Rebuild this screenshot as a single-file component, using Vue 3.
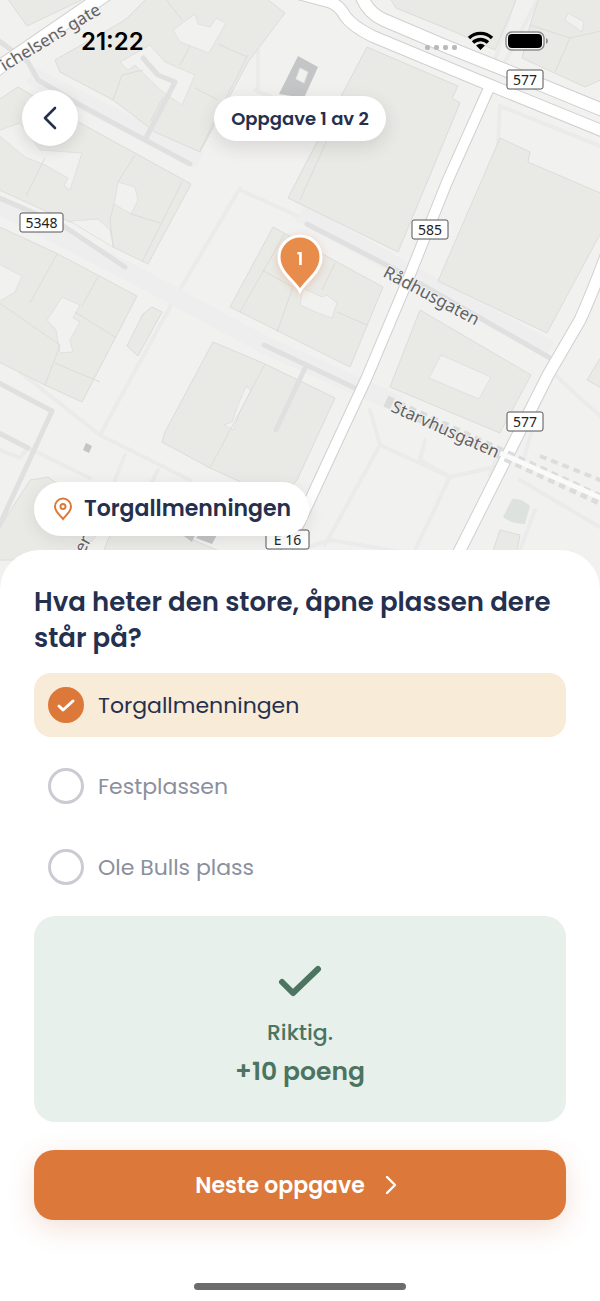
<script setup>
import { ref } from 'vue'

const place = 'Torgallmenningen'
const options = ['Torgallmenningen', 'Festplassen', 'Ole Bulls plass']
const selected = ref('Torgallmenningen')

// map geometry, in map units
const buildings = [
  '5,-5 27,26 92,-5',
  '55,60 125,20 150,-5 262,-5 285,13 248,62 200,152 155,132 113,100 60,72',
  '-5,102 18,87 60,112 135,153 191,184 148,264 113,247 98,219 70,222 -5,188',
  '-5,225 28,240 58,254 137,296 82,402 45,385 -5,360',
  '152,307 162,312 138,356 127,346 143,314',
  '273,227 383,287 350,367 230,307',
  '213,342 265,364 335,398 297,480 280,500 210,468 162,442 165,432',
  '367,47 458,86 452,98 460,103 398,252 288,198 305,165',
  '500,138 530,152 528,162 605,195 605,225 547,333 438,281',
  '388,-5 396,8 455,32 495,50 518,-5',
  '540,-5 605,-5 605,78 585,87 522,58 530,25',
  '420,310 531,375 500,433 390,387',
  '605,350 587,380 605,390',
  '30,480 48,477 110,520 75,560 -5,560 -5,535',
  '110,535 170,530 240,560 100,560',
  '500,530 520,535 515,560 490,560'
]

const yards = [
  '173,30 195,14 198,24 210,27 216,18 226,23 209,53 180,42',
  '120,62 150,45 165,62 195,75 182,105 163,92 148,78 135,65 128,70',
  '-5,132 20,123 40,150 82,153 70,190 64,186 68,178 45,165 25,157',
  '118,182 135,187 138,200 131,214 114,204',
  '70,221 98,219 110,230 114,248',
  '-5,262 22,276 15,292 -5,304',
  '62,297 80,305 73,318 80,322 70,340 73,352 60,353 56,330 47,320',
  '303,288 322,297 327,295 337,303 332,318 318,313 300,305',
  '246,386 251,390 240,412 233,430 224,425 232,422 238,405',
  '565,20 568,13 584,22 582,32',
  '441,355 491,377 479,399 429,378'
]

const walls = [
  'M165 -2 182 20M190 46 180 65M195 88 218 100M113 100 122 75 143 70M218 44 247 57',
  'M248 55 200 150M163 97 150 122M135 155 118 182M131 214 160 223M182 182 142 262',
  'M45 158 26 196M114 204 110 220 113 247M57 254 30 303M98 277 82 306',
  'M75 312 115 337M-5 300 60 345 45 385M55 363 100 382M285 233 240 312',
  'M262 270 293 287 277 332M335 263 322 290M337 312 367 325M265 364 210 468',
  'M333 127 300 200M530 25 570 38 555 72M570 38 605 30'
]

const faintPaths = [
  'M240 188 175 298 130 380 100 435',
  'M240 190 300 217',
  'M125 268 180 298 264 338',
  'M20 372 100 435 190 480',
  'M-5 448 20 458 28 448 90 478M125 455 115 480M158 470 152 482',
  'M370 410 380 445 325 545M380 445 450 477 415 550M425 440 420 460 450 477 490 468',
  'M550 370 582 400 605 420M540 400 525 455M500 106 498 145M500 106 605 148',
  'M520 480 605 530M535 510 520 550M255 90 290 105M258 50 258 92',
  'M516 -5 495 60M540 -5 505 62M500 450 490 475M300 550 330 540 420 555'
]

const darkPaths = [
  'M-5 38 28 62 38 80 55 90 80 105 145 140 190 164',
  'M145 140 175 82 158 75 143 58',
  'M-5 196 62 225 125 267',
  'M264 345 355 388',
  'M307 224 400 272 550 358',
  'M-5 381 52 411 -5 535M-5 431 28 448',
  'M305 368 276 430'
]

const roads = [
  { d: 'M-12 75 115 -12', width: 14 },
  { d: 'M285 -10 330 2Q340 6 345 16Q352 26 372 36L480 81 610 134', width: 12 },
  { d: 'M360 -8Q366 12 384 20L450 48 500 68 610 113', width: 13 },
  { d: 'M489 88 447 182 407 282 367 377 310 500 282 560', width: 11 },
  { d: 'M612 240Q592 294 580 320L548 375 455 560', width: 12 }
]

const shields = [
  { text: '577', x: 507, y: 70, width: 36 },
  { text: '5348', x: 20, y: 213, width: 43 },
  { text: '585', x: 412, y: 220, width: 36 },
  { text: '577', x: 507, y: 412, width: 36 },
  { text: 'E 16', x: 266, y: 530, width: 43 }
]
</script>

<template>
  <main class="screen">
    <section class="map">
      <svg class="map-canvas" viewBox="0 0 600 590" preserveAspectRatio="xMidYMin slice" aria-hidden="true">
        <rect width="600" height="590" class="ground" />
        <path v-for="d in faintPaths" :key="d" :d="d" class="path faint" />
        <path d="M-5 203 135 275 265 345 400 405M30 75 200 160M300 213 400 268 550 350" class="street" />
        <polygon v-for="p in buildings" :key="p" :points="p" class="building" />
        <polygon v-for="p in yards" :key="p" :points="p" class="yard" />
        <path v-for="d in walls" :key="d" :d="d" class="wall" />
        <path v-for="d in darkPaths" :key="d" :d="d" class="path dark" />
        <polygon points="298,56 318,67 304,98 279,94" class="tower" />
        <polygon points="300,68 308,72 304,83 296,79" class="yard" />
        <polygon points="86,443 92,446 89,453 83,450" class="tower" />
        <polygon points="180,533 196,533 192,542" class="tower" />
        <polygon points="200,533 218,533 212,544 196,538" class="tower" />
        <path d="M512 499Q520 497 530 506L525 524Q512 524 503 517z" class="pond" />
        <g class="casing">
          <path v-for="r in roads" :key="r.d" :d="r.d" :stroke-width="r.width + 1" />
        </g>
        <g class="road">
          <path v-for="r in roads" :key="r.d" :d="r.d" :stroke-width="r.width - 1" />
        </g>
        <path d="M386 401 500 453 605 502" class="tunnel" />
        <path d="M500 453 605 500" class="tunnel-fill" />
        <path d="M540 456 605 482" class="tunnel thin" />
        <g class="street-name">
          <text transform="translate(102 13) rotate(-31)" text-anchor="end">ichelsens gate</text>
          <text transform="translate(382 276) rotate(28)">Rådhusgaten</text>
          <text transform="translate(390 411) rotate(24)">Starvhusgaten</text>
          <text transform="translate(84 554) rotate(-62)">er</text>
        </g>
        <g v-for="(s, i) in shields" :key="i" class="shield">
          <rect :x="s.x" :y="s.y" :width="s.width" height="19" rx="2" />
          <text :x="s.x + s.width / 2" :y="s.y + 15">{{ s.text }}</text>
        </g>
      </svg>

      <svg class="pin" viewBox="0 0 48 62" aria-label="Oppgave 1">
        <path d="M24 58C19 48 3 40 3 24a21 21 0 0 1 42 0C45 40 29 48 24 58z" fill="#e88c4c" stroke="#fff" stroke-width="3" />
        <text x="24" y="32">1</text>
      </svg>

      <div class="status-bar">
        <time>21:22</time>
        <div class="status-icons">
          <span class="dots"><i v-for="n in 4" :key="n"></i></span>
          <svg class="wifi" viewBox="0 0 26 20" aria-hidden="true">
            <path d="M1.500 7a16.500 16.500 0 0 1 23 0M5.500 11.500a10.700 10.700 0 0 1 15 0" />
            <path d="M8.600 14.500a6.300 6.300 0 0 1 8.800 0L13 19z" class="wifi-dot" />
          </svg>
          <svg class="battery" viewBox="0 0 43 20" aria-hidden="true">
            <rect x="1" y="1" width="38" height="18" rx="6" fill="#fff" fill-opacity=".5" stroke="#8e8e8e" stroke-width="1.5" />
            <rect x="3" y="3" width="34" height="14" rx="4" />
            <path d="M41 7q2 1 2 3t-2 3z" fill="#8e8e8e" />
          </svg>
        </div>
      </div>

      <nav class="top-nav">
        <button class="back" type="button" aria-label="Tilbake">
          <svg viewBox="0 0 24 24" aria-hidden="true"><path d="M17 2 7 12l10 10" /></svg>
        </button>
        <span class="step">Oppgave 1 av 2</span>
      </nav>

      <div class="place">
        <svg viewBox="0 0 20 24" aria-hidden="true">
          <path d="M10 22C8 19 2 15 2 9.500a8 8 0 0 1 16 0C18 15 12 19 10 22z" />
          <circle cx="10" cy="9.500" r="2.500" />
        </svg>
        <span>{{ place }}</span>
      </div>
    </section>

    <section class="sheet">
      <h1>Hva heter den store, åpne plassen dere står på?</h1>

      <div class="options" role="radiogroup" aria-label="Svar">
        <label v-for="option in options" :key="option" class="option" :class="{ active: selected === option }">
          <span class="radio">
            <input v-model="selected" type="radio" name="answer" :value="option">
            <svg v-if="selected === option" viewBox="0 0 36 36" aria-hidden="true">
              <path d="M11 19l4 4 10-9" />
            </svg>
          </span>
          <span>{{ option }}</span>
        </label>
      </div>

      <div class="feedback">
        <svg viewBox="0 0 44 34" aria-hidden="true"><path d="M4 19l11 11L40 6" /></svg>
        <p class="verdict">Riktig.</p>
        <p class="points">+10 poeng</p>
      </div>

      <button class="next" type="button">
        <span>Neste oppgave</span>
        <svg viewBox="0 0 12 20" aria-hidden="true"><path d="M2 2l8 8-8 8" /></svg>
      </button>

      <div class="home-indicator"></div>
    </section>
  </main>
</template>

<style>
body {
  margin: 0;
  background: #fff;
}
</style>

<style scoped>
.screen {
  font-family: Poppins, Inter, "Open Sans", sans-serif;
  color: #25304e;
}

.map {
  position: relative;
  display: flex;
  flex-direction: column;
  box-sizing: border-box;
  min-height: 590px;
  padding-bottom: 54px;
  overflow: hidden;
}

.map-canvas {
  position: absolute;
  top: 0;
  left: 0;
  width: 100%;
  height: 100%;
}

.map-canvas path {
  fill: none;
}

.ground {
  fill: #f1f1f0;
}

.building {
  fill: #e9eae6;
  stroke: #dcddda;
}

.yard {
  fill: #f1f1f0;
  stroke: #e1e2df;
}

.wall {
  stroke: #dcddda;
}

.street {
  stroke: #eeeeee;
  stroke-width: 18;
}

.path {
  stroke-linejoin: round;
  stroke-linecap: round;
}

.faint {
  stroke: #ebebeb;
  stroke-width: 4;
}

.dark {
  stroke: #e0e0e0;
  stroke-width: 5;
}

.tower {
  fill: #c3c5c6;
}

.map-canvas .pond {
  fill: #dde2de;
}

.casing {
  stroke: #d0d0d0;
}

.road {
  stroke: #fff;
}

.tunnel {
  stroke: #dcdcdc;
  stroke-width: 12;
  stroke-dasharray: 7 5;
}

.tunnel-fill {
  stroke: #fafafa;
  stroke-width: 5;
}

.tunnel.thin {
  stroke-width: 4;
}

.street-name {
  font: 17px "Noto Sans", sans-serif;
  fill: #626262;
  stroke: #f4f4f4;
  stroke-width: 2px;
  paint-order: stroke;
}

.shield rect {
  fill: #fff;
  stroke: #555;
}

.shield text {
  font: 14px "Noto Sans", sans-serif;
  fill: #222;
  text-anchor: middle;
}

.pin {
  position: absolute;
  top: 233px;
  left: 50%;
  width: 48px;
  height: 62px;
  margin-left: -24px;
  filter: drop-shadow(0 2px 4px rgba(220, 120, 60, 0.3));
}

.pin text {
  font-size: 18px;
  font-weight: 600;
  fill: #fff;
  text-anchor: middle;
}

.status-bar {
  position: relative;
  display: flex;
  align-items: center;
  justify-content: space-between;
  height: 82px;
  padding: 0 52px 0 81px;
  color: #000;
}

.status-bar time {
  font: 600 24px Inter, sans-serif;
}

.status-icons {
  display: flex;
  align-items: center;
}

.dots {
  display: flex;
  gap: 4px;
  margin: 12px 10px 0 0;
}

.dots i {
  width: 5px;
  height: 5px;
  border-radius: 2px;
  background: #b9b9b9;
}

.wifi {
  width: 27px;
  height: 20px;
  margin-right: 11px;
}

.wifi path {
  fill: none;
  stroke: #000;
  stroke-width: 3.4;
}

.wifi .wifi-dot {
  fill: #000;
  stroke: none;
}

.battery {
  width: 43px;
  height: 20px;
}

.top-nav {
  position: relative;
  display: grid;
  grid-template-columns: 1fr auto 1fr;
  align-items: center;
  margin-top: 8px;
  padding: 0 22px;
}

.back {
  display: grid;
  place-items: center;
  width: 56px;
  height: 56px;
  padding: 0;
  border: 0;
  border-radius: 50%;
  background: #fff;
  box-shadow: 0 4px 14px rgba(60, 50, 40, 0.14);
}

.back svg {
  width: 24px;
  height: 24px;
  fill: none;
  stroke: #25304e;
  stroke-width: 2.6;
  stroke-linecap: round;
  stroke-linejoin: round;
}

.step {
  padding: 0 17px;
  border-radius: 23px;
  background: #fff;
  box-shadow: 0 6px 18px rgba(60, 50, 40, 0.14);
  font-size: 18px;
  font-weight: 600;
  line-height: 45px;
}

.place {
  position: relative;
  display: flex;
  align-items: center;
  align-self: flex-start;
  gap: 11px;
  margin: auto 0 0 34px;
  padding: 0 18px 0 19px;
  border-radius: 27px;
  background: #fff;
  box-shadow: 0 4px 16px rgba(60, 50, 40, 0.1);
  font-size: 22px;
  font-weight: 600;
  line-height: 54px;
}

.place svg {
  width: 20px;
  height: 24px;
  fill: none;
  stroke: #dc793a;
  stroke-width: 2;
}

.sheet {
  position: relative;
  margin-top: -40px;
  padding: 34px 34px 11px;
  border-radius: 40px 40px 0 0;
  background: #fff;
}

h1 {
  margin: 0;
  font-size: 26px;
  font-weight: 600;
  line-height: 36px;
}

.options {
  display: grid;
  gap: 17px;
  margin: 17px 0;
}

.option {
  display: flex;
  align-items: center;
  gap: 14px;
  height: 64px;
  padding: 0 14px;
  border-radius: 17px;
  color: #8b8f9e;
  font-size: 22px;
}

.option.active {
  background: #f8ebd7;
  color: #25304e;
}

.radio {
  display: grid;
  width: 36px;
  height: 36px;
}

.radio > * {
  grid-area: 1 / 1;
}

.radio input {
  appearance: none;
  width: 36px;
  height: 36px;
  margin: 0;
  border: 3px solid #cbccd3;
  border-radius: 50%;
}

.radio input:checked {
  border-color: #dc793a;
  background: #dc793a;
}

.radio svg {
  fill: none;
  stroke: #fff;
  stroke-width: 3;
  stroke-linecap: round;
  stroke-linejoin: round;
  pointer-events: none;
}

.feedback {
  display: flex;
  flex-direction: column;
  align-items: center;
  padding: 47px 20px 30px;
  border-radius: 21px;
  background: #e8f0eb;
  color: #4b7461;
}

.feedback svg {
  width: 44px;
  height: 34px;
  fill: none;
  stroke: #4b7461;
  stroke-width: 6;
  stroke-linecap: round;
  stroke-linejoin: round;
}

.feedback p {
  margin: 0;
}

.verdict {
  padding-top: 16px;
  font-size: 22px;
  font-weight: 500;
  line-height: 39px;
}

.points {
  font-size: 25px;
  font-weight: 600;
  line-height: 40px;
}

.next {
  display: flex;
  align-items: center;
  justify-content: center;
  gap: 20px;
  width: 100%;
  height: 70px;
  margin-top: 28px;
  padding: 0 8px 0 0;
  border: 0;
  border-radius: 20px;
  background: #dc793a;
  box-shadow: 0 8px 28px rgba(190, 100, 60, 0.2);
  color: #fff;
  font-family: inherit;
  font-size: 22px;
  font-weight: 600;
}

.next svg {
  width: 12px;
  height: 20px;
  fill: none;
  stroke: #fff;
  stroke-width: 2.4;
  stroke-linecap: round;
  stroke-linejoin: round;
}

.home-indicator {
  width: 40%;
  height: 7px;
  margin: 63px auto 0;
  border-radius: 4px;
  background: #6b6c6b;
}
</style>
